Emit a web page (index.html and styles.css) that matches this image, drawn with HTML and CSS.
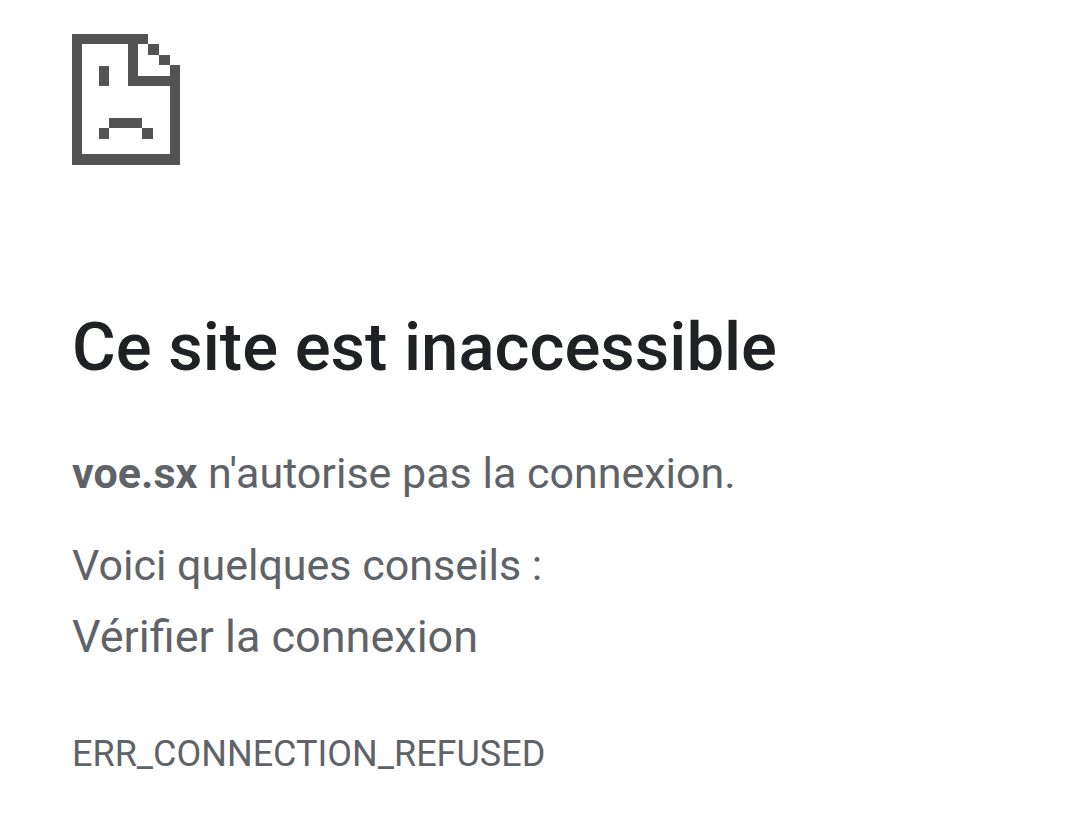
FILE: index.html
```html
<!DOCTYPE html>
<html lang="fr">
<head>
  <meta charset="UTF-8">
  <meta name="viewport" content="width=device-width, initial-scale=1.0">
  <title>voe.sx</title>
  <link rel="stylesheet" href="styles.css">
</head>
<body>
<main class="error-page">
  <svg class="error-icon" viewBox="0 0 108 131" aria-hidden="true">
    <!-- page outline with folded corner -->
    <path fill-rule="evenodd" d="M0 0h76v10h11v11h11v10h10v100H0z M10 10v110h88V52H56V10z M66 10v32h32V31H87V21H76V10z"/>
    <!-- eye and mouth -->
    <path d="M27 32h10v20H27z M37 84h33v10h11v11H70V94H37v11H27V94h10z"/>
  </svg>
  <h1>Ce site est inaccessible</h1>
  <p class="summary"><strong>voe.sx</strong> n'autorise pas la connexion.</p>
  <div class="suggestions">
    <p>Voici quelques conseils :</p>
    <ul>
      <li>Vérifier la connexion</li>
    </ul>
  </div>
  <p class="error-code">ERR_CONNECTION_REFUSED</p>
</main>
</body>
</html>
```
FILE: styles.css
```css
body {
  margin: 0;
  background: #fff;
  color: #5f6368;
  font-family: Roboto, sans-serif;
  font-size: 43px;
  line-height: 64px;
}
.error-page {
  padding: 34px 72px 24px;
}
.error-icon {
  display: block;
  width: 108px;
  height: 131px;
  fill: #535353;
}
h1 {
  margin: 142px 0 0;
  color: #202124;
  font-size: 67px;
  font-weight: 500;
  line-height: 80px;
}
p {
  margin: 0;
}
.summary {
  margin-top: 54px;
}
.suggestions {
  margin-top: 28px;
}
ul {
  margin: 8px 0 0;
  padding: 0;
  font-size: 45px;
  list-style: none;
}
.error-code {
  margin-top: 53px;
  font-size: 36px;
}
```
